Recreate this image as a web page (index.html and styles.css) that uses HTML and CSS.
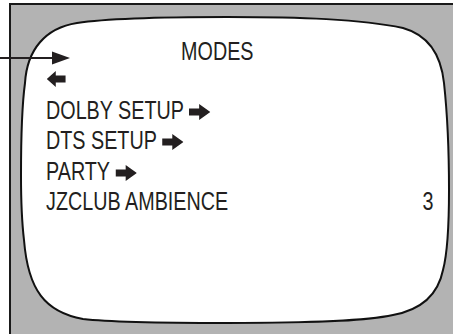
FILE: index.html
```html
<!DOCTYPE html>
<html lang="en">
<head>
  <meta charset="UTF-8" />
  <title>Modes</title>
  <link rel="stylesheet" href="styles.css">
</head>
<body>

<div class="page">
  <svg class="pointer" width="72" height="16" viewBox="0 0 72 16">
    <line x1="0" y1="8" x2="54" y2="8" stroke="#231f20" stroke-width="2" />
    <polygon points="52,1.5 70,8 52,14.5" fill="#231f20" />
  </svg>

  <div class="frame">
    <svg class="screen" width="442" height="329" viewBox="11 5 442 329">
      <path d="M21,175 C21,130 22,105 25,83 C27,50 45,28 77,23 C110,18 160,17 227,17 C300,17 360,19 403,28 C428,35 441,55 444,83 C448,120 449,150 449,190 C449,230 447,255 443,270 C438,295 420,310 393,315 C370,320 330,323 227,323 C150,323 100,321 83,319 C45,312 28,290 24,240 C21,215 21,200 21,175 Z" fill="#ffffff" stroke="#111111" stroke-width="2" />
    </svg>

    <div class="menu">
      <div class="title">MODES</div>
      <div class="row">
        <svg class="arrow back" width="24" height="16" viewBox="0 0 19 16" preserveAspectRatio="none">
          <path d="M19,4.5 H9 V0 L0,8 L9,16 V11.5 H19 Z" fill="#231f20" />
        </svg>
      </div>
      <div class="row">
        <span>DOLBY SETUP
          <svg class="arrow after" width="27" height="16" viewBox="0 0 21 16" preserveAspectRatio="none">
            <path d="M0,4.5 H10 V0 L21,8 L10,16 V11.5 H0 Z" fill="#231f20" />
          </svg>
        </span>
      </div>
      <div class="row">
        <span>DTS SETUP
          <svg class="arrow after" width="27" height="16" viewBox="0 0 21 16" preserveAspectRatio="none">
            <path d="M0,4.5 H10 V0 L21,8 L10,16 V11.5 H0 Z" fill="#231f20" />
          </svg>
        </span>
      </div>
      <div class="row">
        <span>PARTY
          <svg class="arrow after" width="27" height="16" viewBox="0 0 21 16" preserveAspectRatio="none">
            <path d="M0,4.5 H10 V0 L21,8 L10,16 V11.5 H0 Z" fill="#231f20" />
          </svg>
        </span>
      </div>
      <div class="row">
        <span>JZCLUB AMBIENCE</span>
        <span class="value">3</span>
      </div>
    </div>
  </div>
</div>

</body>
</html>
```

FILE: styles.css
```css
body {
  margin: 0;
  background-color: #ffffff;
  font-family: "Liberation Sans", Arial, sans-serif;
  color: #231f20;
}

.page {
  position: relative;
  width: 453px;
  height: 334px;
  overflow: hidden;
  padding: 3px 0 0 9px;
  box-sizing: border-box;
}

.frame {
  position: relative;
  height: 331px;
  background-color: #b3b3b3;
  border-top: 2px solid #1a1a1a;
  border-left: 2px solid #1a1a1a;
  box-sizing: border-box;
}

.screen {
  position: absolute;
  top: 0;
  left: 0;
}

.pointer {
  position: absolute;
  top: 50px;
  left: 0;
  z-index: 2;
}

/* narrow type: the face is condensed like Arial Narrow */
.menu {
  position: relative;
  z-index: 1;
  width: 490.5px;
  margin-left: 34.5px;
  padding-top: 33px;
  font-size: 25px;
  transform: scaleX(0.79);
  transform-origin: left top;
}

.title {
  line-height: 26.5px;
  margin-left: 171px;
}

.row {
  display: flex;
  justify-content: space-between;
  align-items: baseline;
  line-height: 30.4px;
  height: 30.4px;
}

.arrow {
  vertical-align: -1px;
}

.arrow.after {
  margin-left: 0;
}

.arrow.back {
  align-self: center;
  margin-top: -2px;
  margin-left: 1px;
}
```
